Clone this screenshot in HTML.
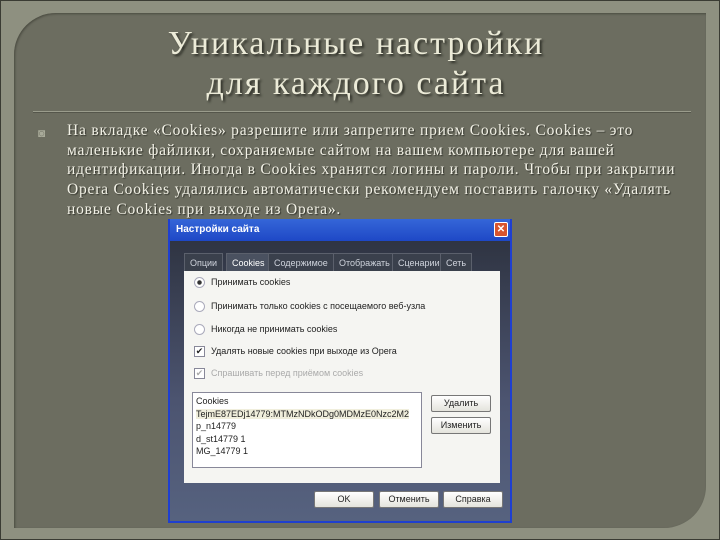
<!DOCTYPE html>
<html><head><meta charset="utf-8"><style>
*{margin:0;padding:0;box-sizing:border-box}
body{width:720px;height:540px;background:#8e9080;position:relative;overflow:hidden;font-family:"Liberation Serif",serif}
.frame{position:absolute;left:0;top:0;width:720px;height:540px;border:1px solid #3a3b33;}
.panel{position:absolute;left:14px;top:13px;width:692px;height:515px;background:#6c6d60;border-radius:42px 0 42px 0;box-shadow:inset 1px 1px 2px #4a4b40}
h1{position:absolute;left:0;width:712px;text-align:center;color:#ecebd8;font-weight:normal;font-size:34px;text-shadow:2px 2px 2px #2f3028;letter-spacing:2px}
.sep{position:absolute;left:33px;top:111px;width:658px;height:2px;background:#9a9c8c;border-bottom:1px solid #55564b}
.txt{position:absolute;left:67px;top:121px;width:640px;color:#f2f1e6;font-size:15.5px;line-height:19.7px;letter-spacing:0.8px;white-space:nowrap;text-shadow:1px 1px 1px #33342c}
.bul{position:absolute;left:38px;top:126px;color:#a9ab9a;font-size:12px}
.dlg{position:absolute;left:168px;top:219px;width:344px;height:304px;background:linear-gradient(#2b303c,#4c5470 60%,#56627f);border:2px solid #1f3fd0;border-top:none}
.tb{position:absolute;left:0;top:0;width:340px;height:22px;background:linear-gradient(#3566d8,#1e48c6);color:#fff;font:bold 10px "Liberation Sans",sans-serif;padding:5px 6px}
.x{position:absolute;right:2px;top:3px;width:14px;height:15px;background:#d8552e;border:1px solid #fff;border-radius:2px;color:#fff;font:bold 10px "Liberation Sans";text-align:center;line-height:13px}
.tab{position:absolute;top:34px;height:18px;color:#cfd3dc;font:9px "Liberation Sans",sans-serif;padding:4px 5px;border:1px solid #5b606c;border-bottom:none;background:#3a404c}
.wp{position:absolute;left:14px;top:52px;width:316px;height:212px;background:#f5f5f2;font:9px "Liberation Sans",sans-serif;color:#222}
.row{position:absolute;left:10px;height:14px}
.rad{display:inline-block;width:11px;height:11px;border-radius:50%;border:1px solid #aab;background:#fff;vertical-align:middle;margin-right:6px}
.cb{display:inline-block;width:11px;height:11px;border:1px solid #889;background:#fff;vertical-align:middle;margin-right:6px;font-size:9px;line-height:9px;text-align:center}
.list{position:absolute;left:8px;top:121px;width:230px;height:76px;background:#fff;border:1px solid #889;padding:2px 3px;line-height:12.5px;font-size:9px}
.btn{position:absolute;width:60px;height:17px;background:linear-gradient(#fff,#e4e3dc);border:1px solid #777;border-radius:2px;font:9px "Liberation Sans",sans-serif;text-align:center;line-height:15px;color:#222}
</style></head><body>
<div class="frame"></div>
<div class="panel"></div>
<h1 style="top:25px">Уникальные настройки</h1>
<h1 style="top:65px">для каждого сайта</h1>
<div class="sep"></div>
<div class="bul">◙</div>
<div class="txt">На вкладке «Cookies» разрешите или запретите прием Cookies. Cookies – это<br>маленькие файлики, сохраняемые сайтом на вашем компьютере для вашей<br>идентификации. Иногда в Cookies хранятся логины и пароли. Чтобы при закрытии<br>Opera Cookies удалялись автоматически рекомендуем поставить галочку «Удалять<br>новые Cookies при выходе из Opera».</div>
<div class="dlg">
<div class="tb">Настройки сайта<div class="x">✕</div></div>
<div class="tab" style="left:14px">Опции</div>
<div class="tab" style="left:56px;background:#4a5160;color:#fff">Cookies</div>
<div class="tab" style="left:98px">Содержимое</div>
<div class="tab" style="left:163px">Отображать</div>
<div class="tab" style="left:222px">Сценарии</div>
<div class="tab" style="left:270px">Сеть</div>
<div class="wp">
<div class="row" style="top:6px"><span class="rad" style="background:radial-gradient(#333 30%,#fff 40%)"></span>Принимать cookies</div>
<div class="row" style="top:30px"><span class="rad"></span>Принимать только cookies с посещаемого веб-узла</div>
<div class="row" style="top:53px"><span class="rad"></span>Никогда не принимать cookies</div>
<div class="row" style="top:75px"><span class="cb">✔</span>Удалять новые cookies при выходе из Opera</div>
<div class="row" style="top:97px;color:#aaa"><span class="cb" style="color:#aaa">✔</span>Спрашивать перед приёмом cookies</div>
<div class="list">Cookies<br><span style="background:#f0eedc">TejmE87EDj14779:MTMzNDkODg0MDMzE0Nzc2M2</span><br>p_n14779<br>d_st14779 1<br>MG_14779 1</div>
<div class="btn" style="left:247px;top:124px">Удалить</div>
<div class="btn" style="left:247px;top:146px">Изменить</div>
</div>
<div class="btn" style="left:144px;top:272px">OK</div>
<div class="btn" style="left:209px;top:272px">Отменить</div>
<div class="btn" style="left:273px;top:272px">Справка</div>
</div>
</body></html>
